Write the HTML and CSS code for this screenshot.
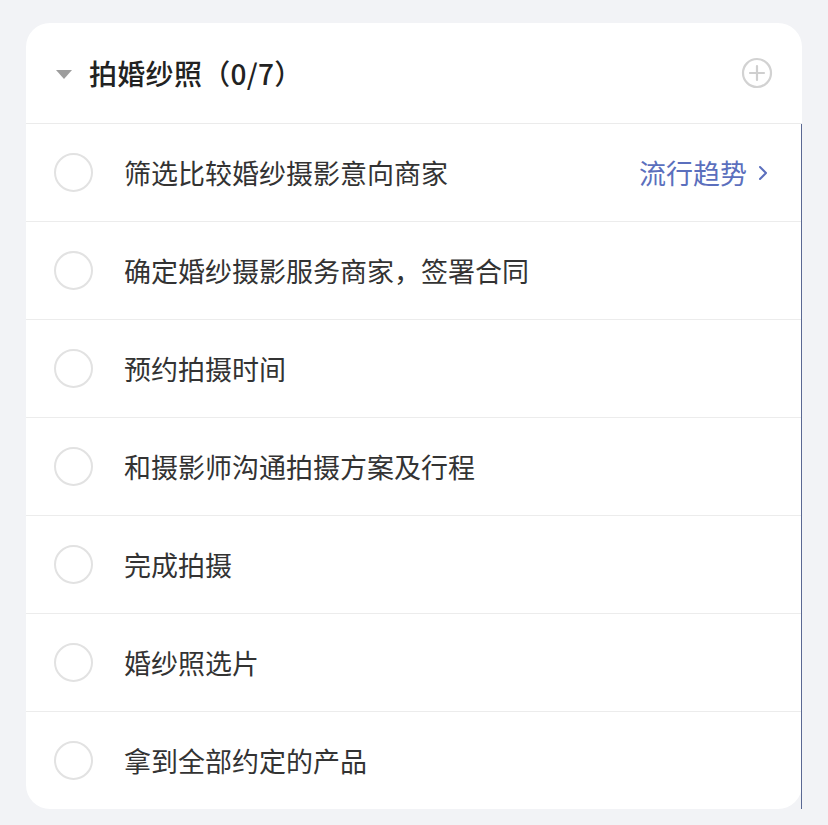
FILE: index.html
```html
<!DOCTYPE html>
<html lang="zh-CN">
<head>
<meta charset="utf-8">
<link rel="stylesheet" href="styles.css">
</head>
<body>
<div class="card">
  <div class="header">
    <span class="caret"></span>
    <span class="title">拍婚纱照（0/7）</span>
    <svg class="plus" width="32" height="32" viewBox="0 0 32 32"><circle cx="16" cy="16" r="14" fill="none" stroke="#d2d2d2" stroke-width="2.2"/><path d="M16 9v14M9 16h14" stroke="#cfcfcf" stroke-width="2.2" stroke-linecap="round"/></svg>
  </div>
  <div class="list">
    <div class="row"><span class="check"></span><span class="text">筛选比较婚纱摄影意向商家</span><span class="trend">流行趋势<svg class="chev" width="12" height="18" viewBox="0 0 12 18"><path d="M3 3l6 6-6 6" fill="none" stroke="#5b6fbd" stroke-width="2" stroke-linecap="round" stroke-linejoin="round"/></svg></span></div>
    <div class="row"><span class="check"></span><span class="text">确定婚纱摄影服务商家，签署合同</span></div>
    <div class="row"><span class="check"></span><span class="text">预约拍摄时间</span></div>
    <div class="row"><span class="check"></span><span class="text">和摄影师沟通拍摄方案及行程</span></div>
    <div class="row"><span class="check"></span><span class="text">完成拍摄</span></div>
    <div class="row"><span class="check"></span><span class="text">婚纱照选片</span></div>
    <div class="row"><span class="check"></span><span class="text">拿到全部约定的产品</span></div>
  </div>
</div>
</body>
</html>
```
FILE: styles.css
```css
html, body {
  margin: 0;
  padding: 0;
  background: #f2f3f6;
  font-family: "Noto Sans CJK SC", "Noto Sans", sans-serif;
}
body {
  padding: 23px 26px 0 26px;
}
.card {
  width: 776px;
  background: #ffffff;
  border-radius: 24px;
}
.header {
  height: 100px;
  display: flex;
  align-items: center;
  padding: 0 29px 0 30px;
  border-bottom: 1px solid #ebebeb;
  box-sizing: content-box;
}
.caret {
  width: 0;
  height: 0;
  border-left: 8px solid transparent;
  border-right: 8px solid transparent;
  border-top: 9px solid #9d9d9d;
  margin-top: 2px;
}
.title {
  margin-left: 17px;
  font-size: 28px;
  font-weight: 500;
  color: #222222;
  flex: 1;
  letter-spacing: 0.3px;
}
.plus {
  display: block;
}
.list {
  border-right: 1.5px solid #5a6893;
}
.row {
  height: 97px;
  display: flex;
  align-items: center;
  padding: 0 32px 0 28px;
  border-bottom: 1px solid #ececec;
}
.row:last-child {
  border-bottom: none;
}
.check {
  width: 35px;
  height: 35px;
  border: 2px solid #e2e2e2;
  border-radius: 50%;
  flex: none;
}
.text {
  margin-left: 31px;
  font-size: 27px;
  color: #333333;
  flex: 1;
}
.trend {
  font-size: 27px;
  color: #5b6fbd;
  display: flex;
  align-items: center;
}
.chev {
  margin-left: 10px;
}
```
